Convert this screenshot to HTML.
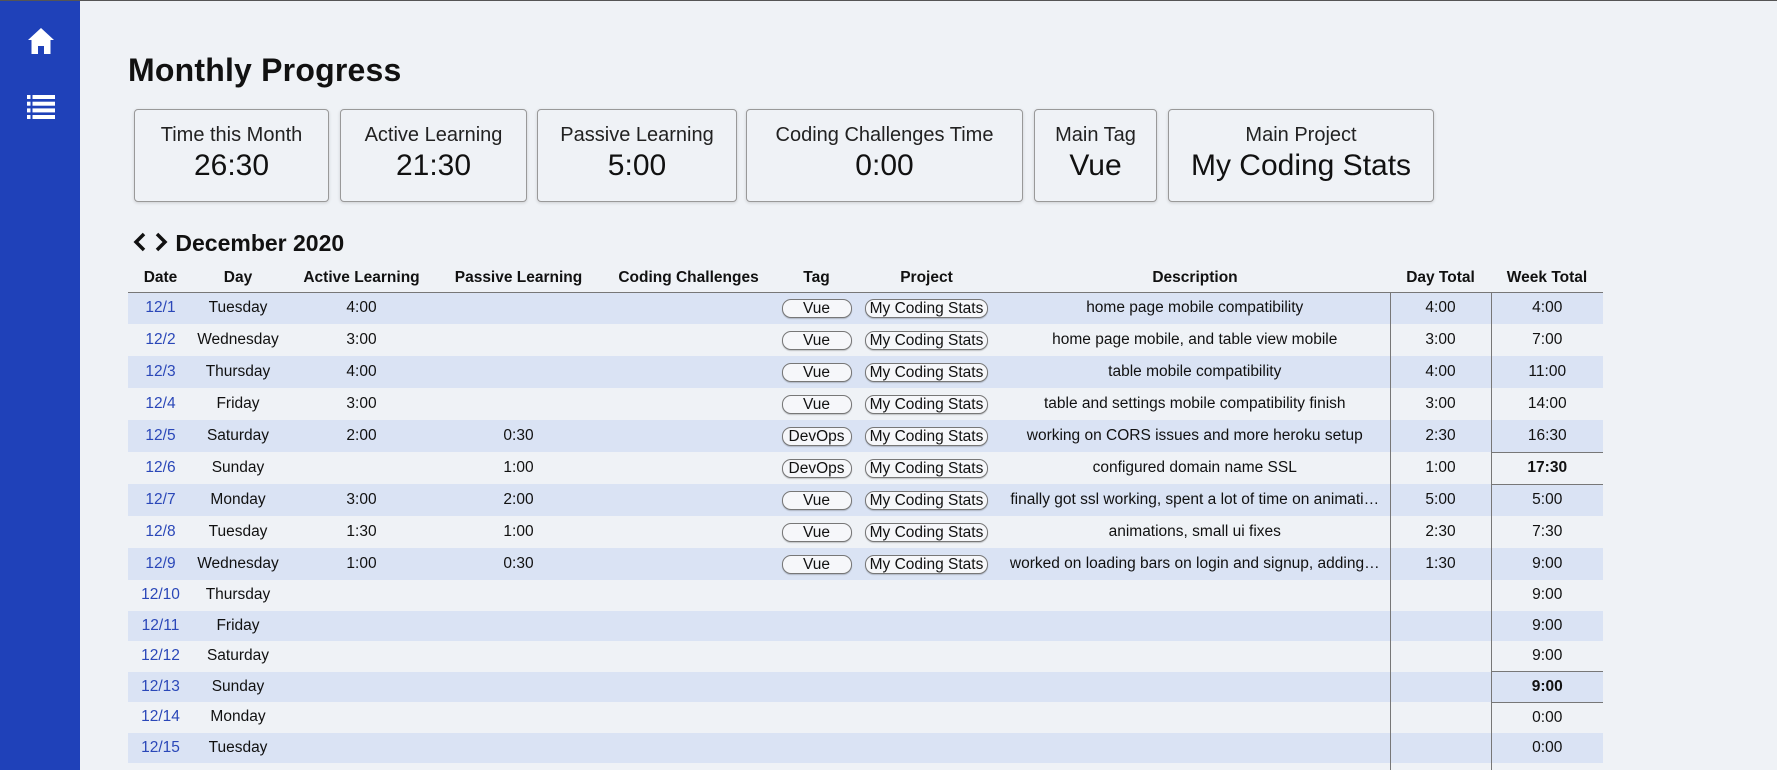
<!DOCTYPE html>
<html style="overflow:hidden;height:770px"><head><meta charset="utf-8"><style>
*{margin:0;padding:0;box-sizing:border-box}
html,body{overflow:hidden}
body{width:1777px;height:770px;background:#eff2f6;font-family:"Liberation Sans",Arial,sans-serif;color:#111;position:relative;border-top:1px solid #555}
.side{position:absolute;left:0;top:0;width:80px;height:770px;background:#1f41b9}
h1{position:absolute;left:128px;top:51px;font-size:32px;font-weight:bold;letter-spacing:0.2px}
.card{position:absolute;top:108px;height:93px;border:1px solid #999;border-radius:4px;background:#eff2f6;text-align:center;box-shadow:0 1px 3px rgba(0,0,0,.15)}
.card .l{font-size:20px;margin-top:14px;color:#222}
.card .v{font-size:30px;margin-top:2px}
.mh{position:absolute;left:133px;top:229px;font-size:23px;font-weight:bold}
.wrap{position:absolute;left:128px;top:268px;width:1475px;height:502px;overflow:hidden}
table{border-collapse:collapse;width:1475px;font-size:15.5px}
th{font-size:15.5px;height:23px;font-weight:bold;border-bottom:1px solid #777;vertical-align:top}
td{text-align:center;white-space:nowrap;overflow:hidden;text-overflow:ellipsis}
tbody tr{height:32px}
tbody tr.e{height:30.5px}
tbody tr:nth-child(odd){background:#dae3f4}
td.d{color:#2a47b8}
td.dt{border-left:1px solid #777;border-right:1px solid #777}
.p{display:inline-block;border:1px solid #777;border-radius:9px;height:19px;line-height:17px;padding:0 4px;background:#f6f7fa;box-shadow:0 1px 1px rgba(0,0,0,.2)}
.t{width:70px}
td.b{font-weight:bold;border-top:1px solid #777;border-bottom:1px solid #777}
.desc{max-width:390px}
</style></head><body>
<div class="side">
<svg style="position:absolute;left:27px;top:26px" width="28" height="28" viewBox="0 0 28 28"><path d="M14 1 L1 13 L4.5 13 L4.5 27 L11 27 L11 19 L17 19 L17 27 L23.5 27 L23.5 13 L27 13 Z" fill="#fff"/></svg>
<svg style="position:absolute;left:27px;top:94px" width="28" height="24" viewBox="0 0 28 24" fill="#fff"><rect x="0" y="0" width="3.5" height="4"/><rect x="5.5" y="0" width="22.5" height="4"/><rect x="0" y="6.7" width="3.5" height="4"/><rect x="5.5" y="6.7" width="22.5" height="4"/><rect x="0" y="13.4" width="3.5" height="4"/><rect x="5.5" y="13.4" width="22.5" height="4"/><rect x="0" y="20" width="3.5" height="4"/><rect x="5.5" y="20" width="22.5" height="4"/></svg>
</div>
<h1>Monthly Progress</h1>
<div class="card" style="left:134px;width:195px"><div class="l">Time this Month</div><div class="v">26:30</div></div>
<div class="card" style="left:340px;width:187px"><div class="l">Active Learning</div><div class="v">21:30</div></div>
<div class="card" style="left:537px;width:200px"><div class="l">Passive Learning</div><div class="v">5:00</div></div>
<div class="card" style="left:746px;width:277px"><div class="l">Coding Challenges Time</div><div class="v">0:00</div></div>
<div class="card" style="left:1034px;width:123px"><div class="l">Main Tag</div><div class="v">Vue</div></div>
<div class="card" style="left:1168px;width:266px"><div class="l">Main Project</div><div class="v">My Coding Stats</div></div>
<div class="mh"><svg width="36" height="20" viewBox="0 0 36 20" style="vertical-align:-1px"><path d="M11 2 L3 10 L11 18 M24 2 L32 10 L24 18" stroke="#111" stroke-width="3.5" fill="none"/></svg> December 2020</div>
<div class="wrap">
<table>
<colgroup><col style="width:65px"><col style="width:90px"><col style="width:157px"><col style="width:157px"><col style="width:183px"><col style="width:73px"><col style="width:147px"><col style="width:390px"><col style="width:101px"><col style="width:112px"></colgroup>
<thead><tr><th>Date</th><th>Day</th><th>Active Learning</th><th>Passive Learning</th><th>Coding Challenges</th><th>Tag</th><th>Project</th><th>Description</th><th>Day Total</th><th>Week Total</th></tr></thead>
<tbody>
<tr><td class="d">12/1</td><td>Tuesday</td><td>4:00</td><td></td><td></td><td><span class="p t">Vue</span></td><td><span class="p">My Coding Stats</span></td><td class="desc">home page mobile compatibility</td><td class="dt">4:00</td><td>4:00</td></tr>
<tr><td class="d">12/2</td><td>Wednesday</td><td>3:00</td><td></td><td></td><td><span class="p t">Vue</span></td><td><span class="p">My Coding Stats</span></td><td class="desc">home page mobile, and table view mobile</td><td class="dt">3:00</td><td>7:00</td></tr>
<tr><td class="d">12/3</td><td>Thursday</td><td>4:00</td><td></td><td></td><td><span class="p t">Vue</span></td><td><span class="p">My Coding Stats</span></td><td class="desc">table mobile compatibility</td><td class="dt">4:00</td><td>11:00</td></tr>
<tr><td class="d">12/4</td><td>Friday</td><td>3:00</td><td></td><td></td><td><span class="p t">Vue</span></td><td><span class="p">My Coding Stats</span></td><td class="desc">table and settings mobile compatibility finish</td><td class="dt">3:00</td><td>14:00</td></tr>
<tr><td class="d">12/5</td><td>Saturday</td><td>2:00</td><td>0:30</td><td></td><td><span class="p t">DevOps</span></td><td><span class="p">My Coding Stats</span></td><td class="desc">working on CORS issues and more heroku setup</td><td class="dt">2:30</td><td>16:30</td></tr>
<tr><td class="d">12/6</td><td>Sunday</td><td></td><td>1:00</td><td></td><td><span class="p t">DevOps</span></td><td><span class="p">My Coding Stats</span></td><td class="desc">configured domain name SSL</td><td class="dt">1:00</td><td class="b">17:30</td></tr>
<tr><td class="d">12/7</td><td>Monday</td><td>3:00</td><td>2:00</td><td></td><td><span class="p t">Vue</span></td><td><span class="p">My Coding Stats</span></td><td class="desc">finally got ssl working, spent a lot of time on animati…</td><td class="dt">5:00</td><td>5:00</td></tr>
<tr><td class="d">12/8</td><td>Tuesday</td><td>1:30</td><td>1:00</td><td></td><td><span class="p t">Vue</span></td><td><span class="p">My Coding Stats</span></td><td class="desc">animations, small ui fixes</td><td class="dt">2:30</td><td>7:30</td></tr>
<tr><td class="d">12/9</td><td>Wednesday</td><td>1:00</td><td>0:30</td><td></td><td><span class="p t">Vue</span></td><td><span class="p">My Coding Stats</span></td><td class="desc">worked on loading bars on login and signup, adding…</td><td class="dt">1:30</td><td>9:00</td></tr>
<tr class="e"><td class="d">12/10</td><td>Thursday</td><td></td><td></td><td></td><td></td><td></td><td></td><td class="dt"></td><td>9:00</td></tr>
<tr class="e"><td class="d">12/11</td><td>Friday</td><td></td><td></td><td></td><td></td><td></td><td></td><td class="dt"></td><td>9:00</td></tr>
<tr class="e"><td class="d">12/12</td><td>Saturday</td><td></td><td></td><td></td><td></td><td></td><td></td><td class="dt"></td><td>9:00</td></tr>
<tr class="e"><td class="d">12/13</td><td>Sunday</td><td></td><td></td><td></td><td></td><td></td><td></td><td class="dt"></td><td class="b">9:00</td></tr>
<tr class="e"><td class="d">12/14</td><td>Monday</td><td></td><td></td><td></td><td></td><td></td><td></td><td class="dt"></td><td>0:00</td></tr>
<tr class="e"><td class="d">12/15</td><td>Tuesday</td><td></td><td></td><td></td><td></td><td></td><td></td><td class="dt"></td><td>0:00</td></tr>
<tr class="e"><td class="d"></td><td></td><td></td><td></td><td></td><td></td><td></td><td></td><td class="dt"></td><td></td></tr>
</tbody></table>
</div>
</body></html>
